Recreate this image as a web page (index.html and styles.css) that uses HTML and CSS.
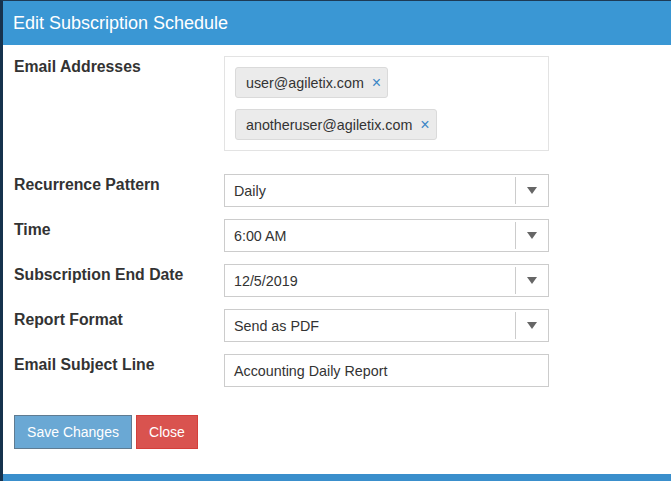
FILE: index.html
```html
<!DOCTYPE html>
<html>
<head>
<meta charset="utf-8">
<link rel="stylesheet" href="styles.css">
</head>
<body>
<div class="modal">
  <div class="modal-header">Edit Subscription Schedule</div>
  <div class="modal-body">
    <div class="row row-email">
      <label class="label">Email Addresses</label>
      <div class="tag-box">
        <span class="tag">user@agiletix.com <span class="x">×</span></span>
        <span class="tag">anotheruser@agiletix.com <span class="x">×</span></span>
      </div>
    </div>
    <div class="row">
      <label class="label">Recurrence Pattern</label>
      <div class="select"><span class="value">Daily</span><span class="caret"><i></i></span></div>
    </div>
    <div class="row">
      <label class="label">Time</label>
      <div class="select"><span class="value">6:00 AM</span><span class="caret"><i></i></span></div>
    </div>
    <div class="row">
      <label class="label">Subscription End Date</label>
      <div class="select"><span class="value">12/5/2019</span><span class="caret"><i></i></span></div>
    </div>
    <div class="row">
      <label class="label">Report Format</label>
      <div class="select"><span class="value">Send as PDF</span><span class="caret"><i></i></span></div>
    </div>
    <div class="row">
      <label class="label">Email Subject Line</label>
      <div class="select text"><span class="value">Accounting Daily Report</span></div>
    </div>
    <div class="buttons">
      <button class="btn btn-save">Save Changes</button>
      <button class="btn btn-close">Close</button>
    </div>
  </div>
  <div class="modal-footer"></div>
</div>
</body>
</html>
```
FILE: styles.css
```css
html, body {
  margin: 0;
  padding: 0;
  background: #fff;
}
body {
  font-family: "Liberation Sans", Arial, sans-serif;
  color: #333;
}
.modal {
  width: 671px;
  height: 481px;
  box-sizing: border-box;
  border-left: 3px solid #16324d;
  border-top: 1px solid #1d3a55;
  display: flex;
  flex-direction: column;
  background: #fff;
}
.modal-header {
  height: 44px;
  background: #3a97d4;
  color: #fff;
  font-size: 18px;
  line-height: 44px;
  padding-left: 10px;
  flex: none;
}
.modal-body {
  flex: 1;
  padding: 11px 0 0 11px;
}
.row {
  display: flex;
  align-items: flex-start;
  margin-bottom: 12px;
}
.row-email {
  margin-bottom: 23px;
}
.label {
  width: 210px;
  flex: none;
  font-weight: bold;
  font-size: 15.8px;
  line-height: 20px;
  margin-top: 1px;
}
.tag-box {
  width: 325px;
  box-sizing: border-box;
  border: 1px solid #e3e3e3;
  padding: 10px;
  display: flex;
  flex-direction: column;
  align-items: flex-start;
  gap: 11px;
}
.tag {
  display: inline-block;
  height: 31px;
  box-sizing: border-box;
  line-height: 29px;
  background: #ebebeb;
  border: 1px solid #dadada;
  border-radius: 3px;
  padding: 0 6px 0 10px;
  font-size: 14.3px;
  color: #333;
}
.tag .x {
  color: #3b86c6;
  font-size: 16px;
  margin-left: 4px;
}
.select {
  width: 325px;
  height: 33px;
  box-sizing: border-box;
  border: 1px solid #ccc;
  display: flex;
  align-items: center;
  font-size: 14.3px;
  color: #333;
}
.select .value {
  flex: 1;
  padding-left: 9px;
}
.select .caret {
  width: 32px;
  height: 27px;
  border-left: 1px solid #ccc;
  display: flex;
  align-items: center;
  justify-content: center;
}
.select .caret i {
  width: 0;
  height: 0;
  border-left: 5.5px solid transparent;
  border-right: 5.5px solid transparent;
  border-top: 7px solid #666;
}
.buttons {
  display: flex;
  gap: 4px;
  margin-top: 28px;
}
.btn {
  height: 34px;
  box-sizing: border-box;
  font-family: "Liberation Sans", Arial, sans-serif;
  font-size: 14px;
  color: #fff;
  padding: 0 12px;
  margin: 0;
  border-radius: 0;
}
.btn-save {
  width: 118px;
  background: #6aa8d4;
  border: 1px solid #5f7b91;
}
.btn-close {
  width: 62px;
  background: #d9534f;
  border: 1px solid #d43f3a;
}
.modal-footer {
  height: 7px;
  background: #3a8fcc;
  flex: none;
}
```
